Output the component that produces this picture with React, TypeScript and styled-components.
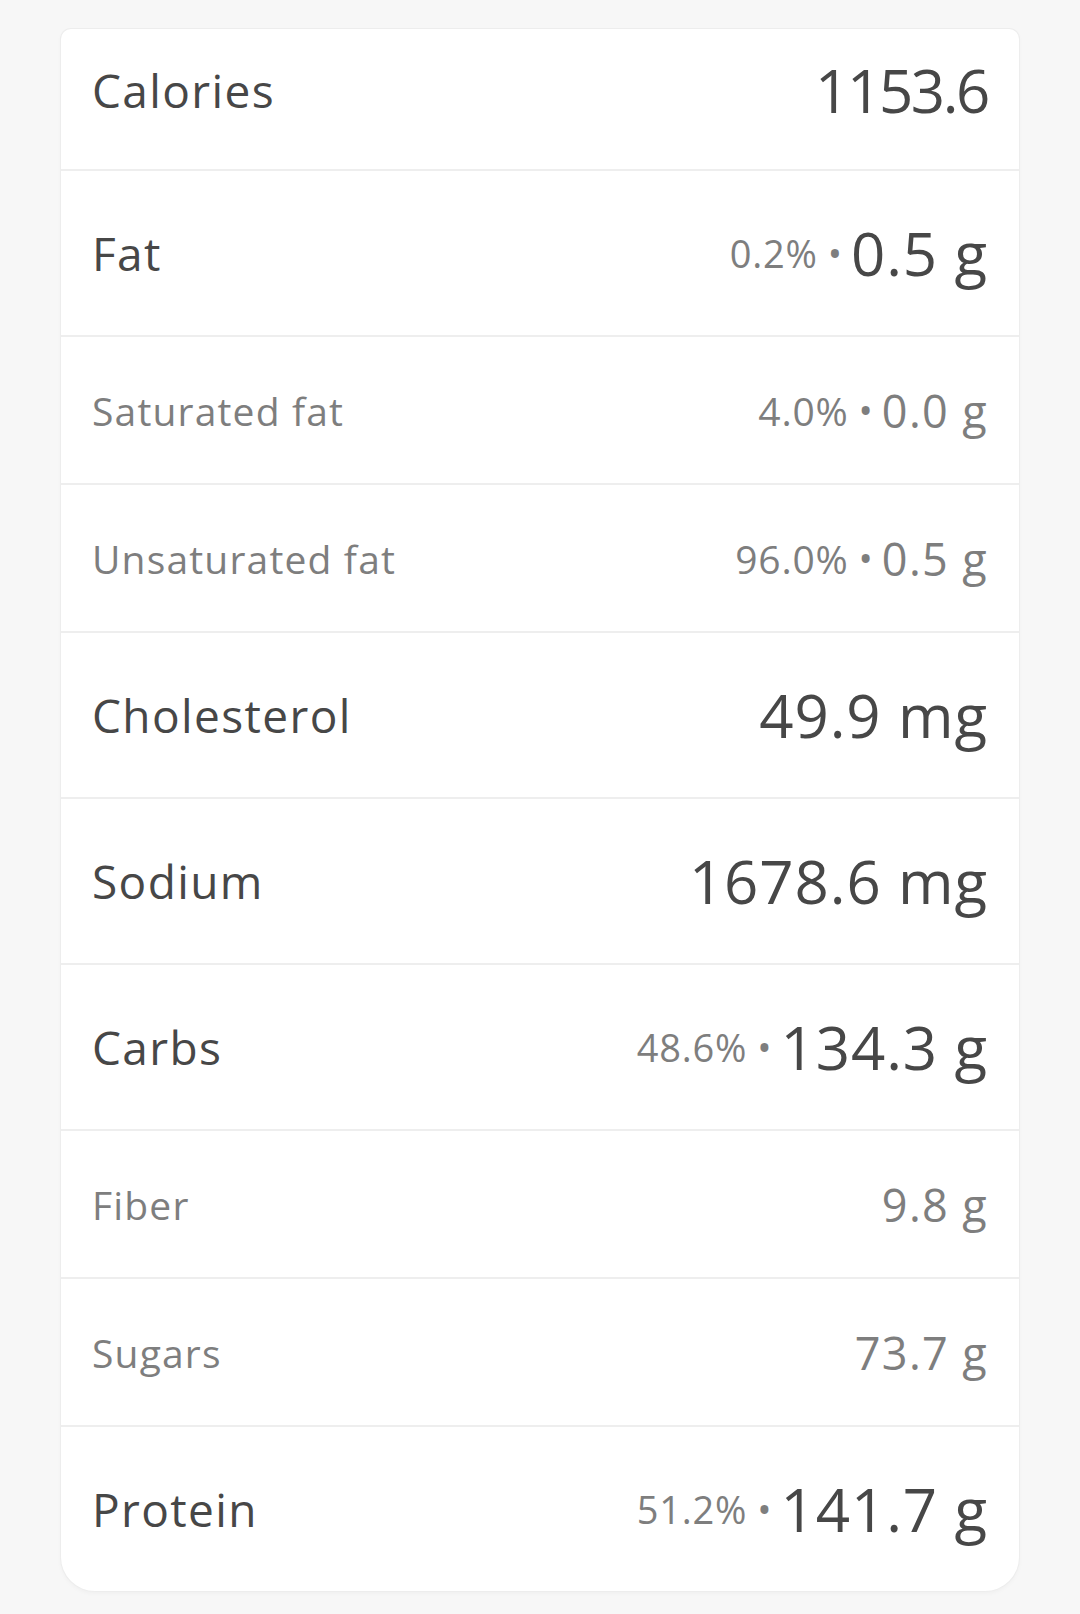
import React from "react";
import styled, { createGlobalStyle, css } from "styled-components";

const GlobalStyle = createGlobalStyle`
  html, body {
    margin: 0;
    padding: 0;
    background: #f7f7f7;
  }
  body {
    font-family: "Open Sans", "Noto Sans", Arial, sans-serif;
    -webkit-font-smoothing: antialiased;
  }
`;

const Page = styled.div`
  padding: 29px 61px 22px 61px;
`;

const Card = styled.div`
  background: #ffffff;
  border-radius: 10px 10px 34px 34px;
  box-shadow: 0 0 0 1px #ededed, 0 2px 5px rgba(0, 0, 0, 0.04);
  overflow: hidden;
`;

type Kind = "first" | "major" | "minor";

const heights: Record<Kind, number> = { first: 142, major: 166, minor: 148 };

const Row = styled.div<{ $kind: Kind; $last?: boolean }>`
  box-sizing: border-box;
  display: flex;
  align-items: center;
  justify-content: space-between;
  height: ${(p) => (p.$last ? heights[p.$kind] - 2 : heights[p.$kind])}px;
  padding: 0 31px 0 31px;
  border-bottom: ${(p) => (p.$last ? "none" : "2px solid #eeeeee")};
  ${(p) =>
    p.$kind === "first" &&
    css`
      padding-bottom: 18px;
    `}
`;

const Label = styled.span<{ $minor?: boolean }>`
  line-height: 1;
  letter-spacing: 0.03em;
  color: ${(p) => (p.$minor ? "#7e7e7e" : "#474747")};
  font-size: ${(p) => (p.$minor ? 39 : 46)}px;
`;

const ValueGroup = styled.div`
  display: flex;
  align-items: center;
`;

const Percent = styled.span<{ $minor?: boolean }>`
  line-height: 1;
  color: #7e7e7e;
  letter-spacing: 0.02em;
  font-size: ${(p) => (p.$minor ? 39 : 38)}px;
`;

const Dot = styled.span`
  line-height: 1;
  color: #7e7e7e;
  font-size: 38px;
  margin: 0 9px 0 10px;
`;

const Amount = styled.span<{ $minor?: boolean; $tight?: boolean }>`
  line-height: 1;
  letter-spacing: ${(p) =>
    p.$tight ? "-0.04em" : p.$minor ? "0.03em" : "0.015em"};
  color: ${(p) => (p.$minor ? "#7e7e7e" : "#474747")};
  font-size: ${(p) => (p.$minor ? 45 : 60)}px;
`;

type Item = {
  label: string;
  value: string;
  percent?: string;
  kind: Kind;
};

const items: Item[] = [
  { label: "Calories", value: "1153.6", kind: "first" },
  { label: "Fat", value: "0.5 g", percent: "0.2%", kind: "major" },
  { label: "Saturated fat", value: "0.0 g", percent: "4.0%", kind: "minor" },
  { label: "Unsaturated fat", value: "0.5 g", percent: "96.0%", kind: "minor" },
  { label: "Cholesterol", value: "49.9 mg", kind: "major" },
  { label: "Sodium", value: "1678.6 mg", kind: "major" },
  { label: "Carbs", value: "134.3 g", percent: "48.6%", kind: "major" },
  { label: "Fiber", value: "9.8 g", kind: "minor" },
  { label: "Sugars", value: "73.7 g", kind: "minor" },
  { label: "Protein", value: "141.7 g", percent: "51.2%", kind: "major" },
];

export default function App() {
  return (
    <>
      <GlobalStyle />
      <Page>
        <Card>
          {items.map((it, i) => {
            const minor = it.kind === "minor";
            return (
              <Row key={it.label} $kind={it.kind} $last={i === items.length - 1}>
                <Label $minor={minor}>{it.label}</Label>
                <ValueGroup>
                  {it.percent && (
                    <>
                      <Percent $minor={minor}>{it.percent}</Percent>
                      <Dot>•</Dot>
                    </>
                  )}
                  <Amount $minor={minor} $tight={it.kind === "first"}>
                    {it.value}
                  </Amount>
                </ValueGroup>
              </Row>
            );
          })}
        </Card>
      </Page>
    </>
  );
}
